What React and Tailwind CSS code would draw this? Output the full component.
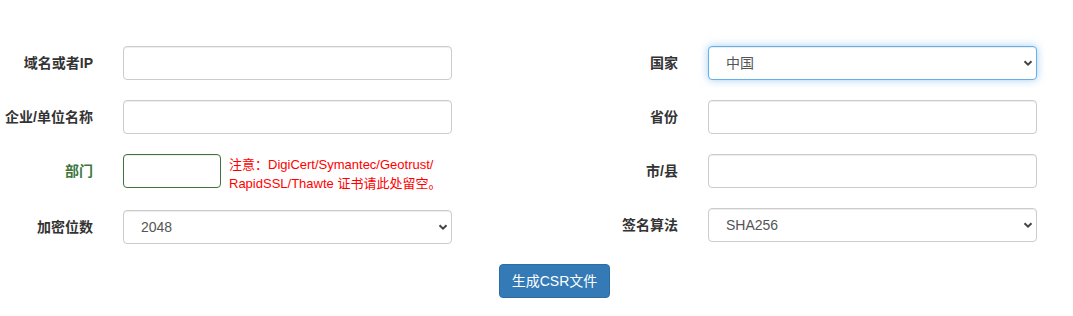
import React from 'react';

const font = { fontFamily: '"Liberation Sans", "Noto Sans CJK SC", sans-serif' };

function Chevron() {
  return (
    <svg className="pointer-events-none absolute right-[4px] top-1/2 -translate-y-1/2" width="10" height="10" viewBox="0 0 10 10">
      <path d="M1.5 3.2 L5 6.7 L8.5 3.2" fill="none" stroke="#444" strokeWidth="2" />
    </svg>
  );
}

function Label({ children, className = 'text-[#333]', width }) {
  return (
    <label className={`h-[34px] shrink-0 flex items-center justify-end text-[14px] font-bold ${className}`} style={{ width }}>
      {children}
    </label>
  );
}

function TextInput({ className = 'w-[329px] border-[#ccc]' }) {
  return (
    <input
      type="text"
      className={`h-[34px] rounded-[4px] border bg-white px-3 text-[14px] text-[#555] outline-none shadow-[inset_0_1px_1px_rgba(0,0,0,0.075)] ${className}`}
    />
  );
}

function Select({ value, options, focused }) {
  return (
    <div className="relative w-[329px]">
      <select
        defaultValue={value}
        className={`h-[34px] w-full appearance-none rounded-[4px] border bg-white pl-[17px] pr-6 text-[14px] text-[#555] outline-none ${
          focused
            ? 'border-[#66afe9] shadow-[inset_0_1px_1px_rgba(0,0,0,0.075),0_0_8px_rgba(102,175,233,0.6)]'
            : 'border-[#ccc] shadow-[inset_0_1px_1px_rgba(0,0,0,0.075)]'
        }`}
      >
        {options.map(o => (
          <option key={o}>{o}</option>
        ))}
      </select>
      <Chevron />
    </div>
  );
}

export default function App() {
  return (
    <div className="w-[1073px] h-[316px] bg-white pt-[46px]" style={font}>
      <div className="flex items-start">
        {/* left column */}
        <div className="flex flex-col gap-[20px]">
          <div className="flex items-start gap-[30px]">
            <Label width={93}>域名或者IP</Label>
            <TextInput />
          </div>
          <div className="flex items-start gap-[30px]">
            <Label width={93}>企业/单位名称</Label>
            <TextInput />
          </div>
          <div className="flex items-start gap-[30px]">
            <Label width={93} className="text-[#3c763d]">部门</Label>
            <div className="flex items-start gap-[8px]">
              <TextInput className="w-[98px] border-[#3c763d]" />
              <p className="text-[13px] leading-[19px] text-[#ff0000] pt-[1px] mb-[-3px]">
                注意：DigiCert/Symantec/Geotrust/
                <br />
                RapidSSL/Thawte 证书请此处留空。
              </p>
            </div>
          </div>
          <div className="flex items-start gap-[30px]">
            <Label width={93}>加密位数</Label>
            <Select value="2048" options={['1024', '2048', '4096']} />
          </div>
        </div>

        {/* right column */}
        <div className="flex flex-col gap-[20px]">
          <div className="flex items-start gap-[30px]">
            <Label width={226}>国家</Label>
            <Select value="中国" options={['中国', '美国', '日本']} focused />
          </div>
          <div className="flex items-start gap-[30px]">
            <Label width={226}>省份</Label>
            <TextInput />
          </div>
          <div className="flex items-start gap-[30px]">
            <Label width={226}>市/县</Label>
            <TextInput />
          </div>
          <div className="flex items-start gap-[30px]">
            <Label width={226}>签名算法</Label>
            <Select value="SHA256" options={['SHA1', 'SHA256']} />
          </div>
        </div>
      </div>

      <div className="mt-[20px] pl-[499px]">
        <button className="h-[34px] w-[111px] rounded-[4px] border border-[#2e6da4] bg-[#337ab7] text-[14px] text-white">
          生成CSR文件
        </button>
      </div>
    </div>
  );
}
